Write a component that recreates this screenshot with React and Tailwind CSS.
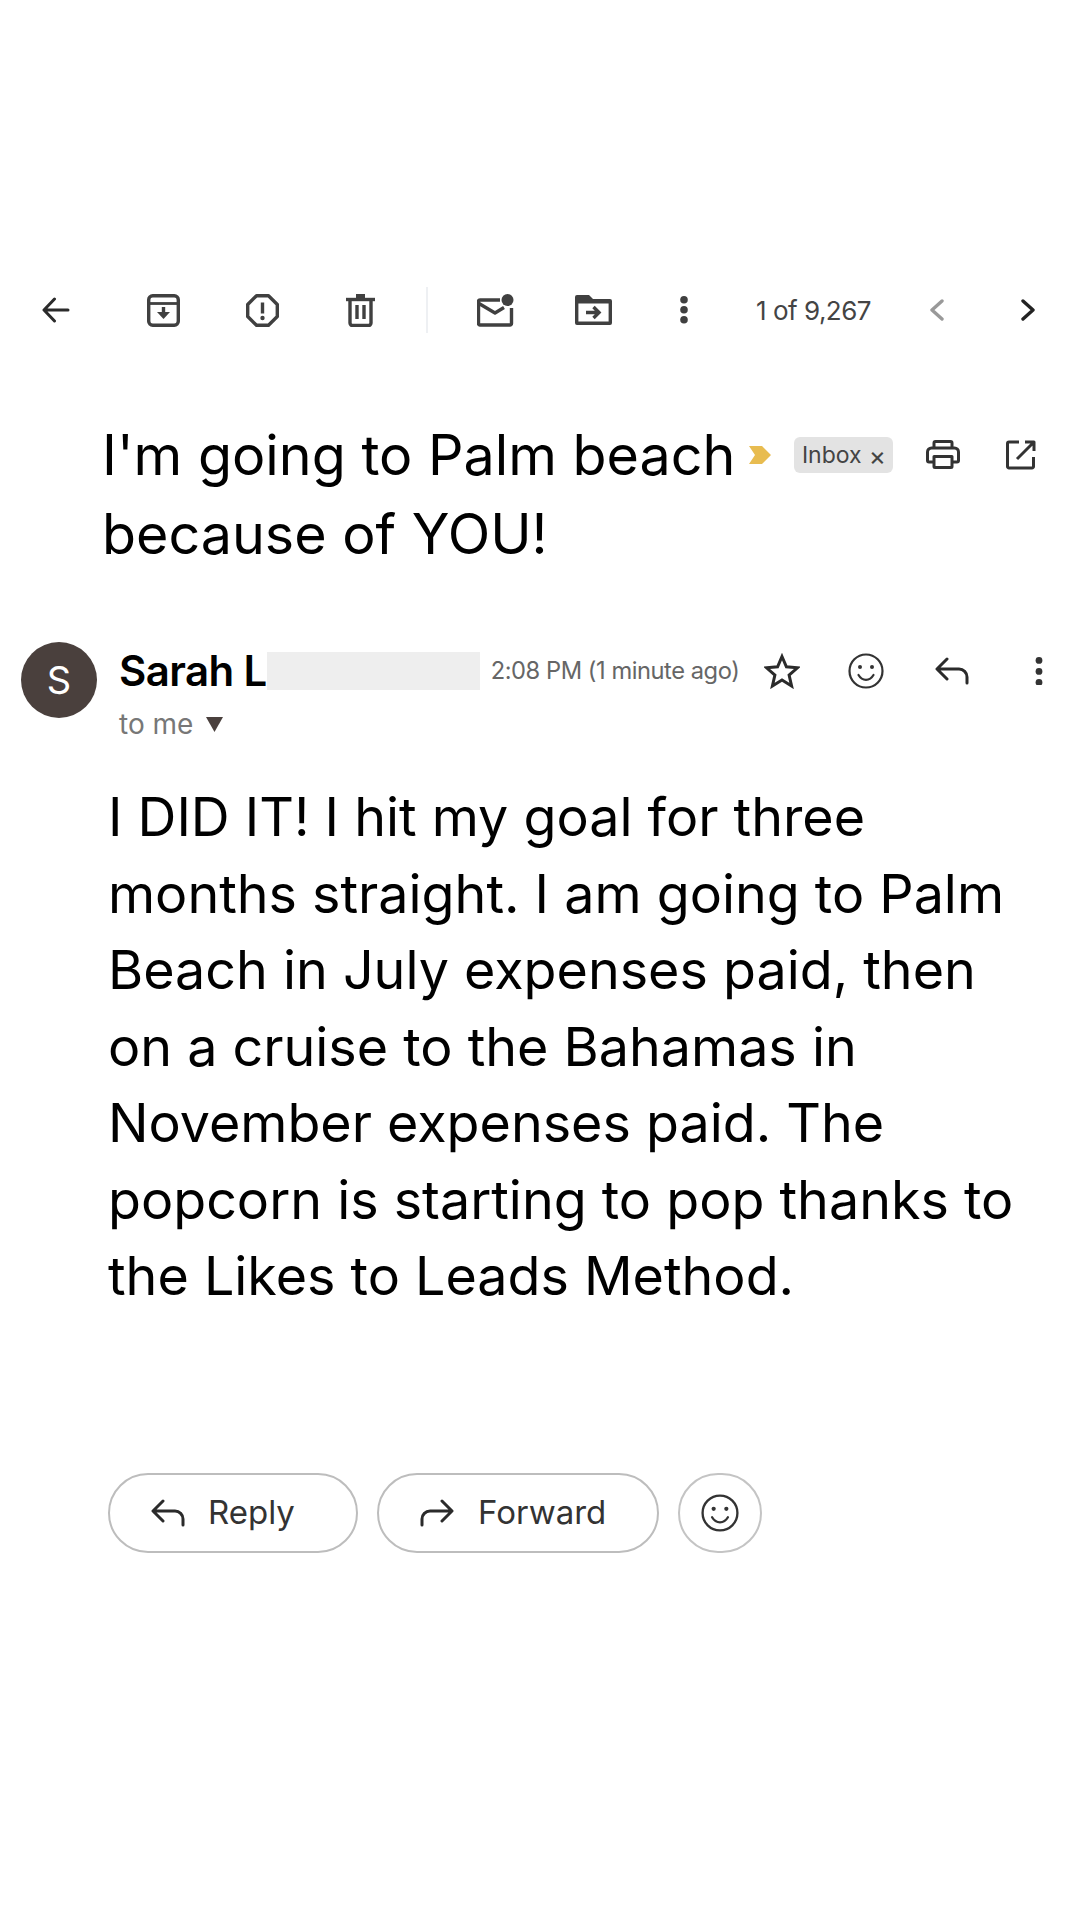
import React from 'react';

const Ink = '#404040';

const BackIcon = () => (
    <svg width="28" height="28" viewBox="0 0 28 28" fill="none" stroke="#2b2b2b" strokeWidth="3" strokeLinecap="round" strokeLinejoin="round">
        <path d="M26 14H2.500M12.500 3 2 14l10.500 11" />
    </svg>
);

const ArchiveIcon = () => (
    <svg width="33" height="33" viewBox="0 0 33 33" fill="none" stroke={Ink} strokeWidth="3.400" strokeLinejoin="round">
        <rect x="1.700" y="1.700" width="29.600" height="29.600" rx="4" />
        <path d="M2 9.500h29" strokeWidth="2.800" />
        <path d="M16.500 13v8" strokeWidth="3.400" />
        <path d="M10 18h13l-6.500 7z" fill={Ink} stroke="none" />
    </svg>
);

const ReportIcon = () => (
    <svg width="33" height="33" viewBox="0 0 33 33" fill="none" stroke={Ink} strokeWidth="3.400" strokeLinejoin="round">
        <path d="M10.500 1.700h12l8.800 8.800v12l-8.800 8.800h-12l-8.800-8.800v-12z" />
        <path d="M16.500 8.500v11" />
        <circle cx="16.500" cy="24" r="2.200" fill={Ink} stroke="none" />
    </svg>
);

const TrashIcon = () => (
    <svg width="29" height="33" viewBox="0 0 29 33" fill="none" stroke={Ink} strokeWidth="3.400" strokeLinejoin="round">
        <path d="M0 5.500h29" />
        <path d="M10 2h9" strokeWidth="4" />
        <path d="M4 6v23a2.500 2.500 0 0 0 2.500 2.500h16a2.500 2.500 0 0 0 2.500-2.500V6" />
        <path d="M11 11v14M18 11v14" />
    </svg>
);

const UnreadIcon = () => (
    <svg width="37" height="33" viewBox="0 0 37 33" fill="none" stroke={Ink} strokeWidth="3.400" strokeLinejoin="round">
        <path d="M23 6H3a1.500 1.500 0 0 0-1.500 1.500v22A1.500 1.500 0 0 0 3 31h30a1.500 1.500 0 0 0 1.500-1.500V14" />
        <path d="M2 9.500 18 19l9-5.500" />
        <circle cx="30.500" cy="6" r="6" fill={Ink} stroke="none" />
    </svg>
);

const MoveIcon = () => (
    <svg width="37" height="30" viewBox="0 0 37 30" fill="none">
        <path d="M2 0h12l4 4h17a2 2 0 0 1 2 2v22a2 2 0 0 1-2 2H2a2 2 0 0 1-2-2V2a2 2 0 0 1 2-2z" fill={Ink} />
        <rect x="3.400" y="8.500" width="30.200" height="18" fill="#fff" />
        <path d="M11 17.500h13M18.500 12l5.500 5.500-5.500 5.500" stroke={Ink} strokeWidth="3.400" />
    </svg>
);

const Dots = ({ size = 3.800, gap = 10, color = Ink }) => (
    <svg width="10" height={gap * 2 + size * 2} viewBox={`0 0 10 ${gap * 2 + size * 2}`} fill={color}>
        <circle cx="5" cy={size} r={size} />
        <circle cx="5" cy={size + gap} r={size} />
        <circle cx="5" cy={size + gap * 2} r={size} />
    </svg>
);

const Chevron = ({ dir, color }) => (
    <svg width="15" height="22" viewBox="0 0 15 22" fill="none" stroke={color} strokeWidth="3.400" strokeLinecap="round" strokeLinejoin="round">
        <path d={dir === 'left' ? 'M13 2 3 11l10 9' : 'M2 2l10 9-10 9'} />
    </svg>
);

const PrintIcon = () => (
    <svg width="34" height="29" viewBox="0 0 34 29" fill="none" stroke="#333" strokeWidth="3" strokeLinejoin="round">
        <path d="M8 8V3a1.500 1.500 0 0 1 1.500-1.500h15A1.500 1.500 0 0 1 26 3v5" />
        <path d="M8 22H3a1.500 1.500 0 0 1-1.500-1.500V12A4 4 0 0 1 5.500 8h23a4 4 0 0 1 4 4v8.500A1.500 1.500 0 0 1 31 22h-5" />
        <path d="M8 16.500h18v10a1 1 0 0 1-1 1H9a1 1 0 0 1-1-1z" />
    </svg>
);

const OpenIcon = () => (
    <svg width="30" height="30" viewBox="0 0 30 30" fill="none" stroke="#333" strokeWidth="3" strokeLinejoin="round">
        <path d="M13 2H3a1.500 1.500 0 0 0-1.500 1.500v23A1.500 1.500 0 0 0 3 28h23a1.500 1.500 0 0 0 1.500-1.500V17" />
        <path d="M19 2h9v9M28 2 11 19" />
    </svg>
);

const StarIcon = () => (
    <svg width="36" height="36" viewBox="0 0 36 36" fill="none" stroke="#2b2b2b" strokeWidth="3" strokeLinejoin="miter">
        <path d="M18 3.500l4.400 10.300 11.100 1-8.400 7.300 2.500 10.900L18 27l-9.600 6 2.500-10.900L2.500 14.800l11.100-1z" />
    </svg>
);

const SmileIcon = ({ size = 36 }) => (
    <svg width={size} height={size} viewBox="0 0 36 36" fill="none" stroke="#333" strokeWidth="2.200">
        <circle cx="18" cy="18" r="16.500" />
        <circle cx="12" cy="14" r="2" fill="#333" stroke="none" />
        <circle cx="24" cy="14" r="2" fill="#333" stroke="none" />
        <path d="M10.500 22c2 3.400 4.500 4.800 7.500 4.800s5.500-1.400 7.500-4.800" strokeLinecap="round" />
    </svg>
);

const ReplyIcon = () => (
    <svg width="34" height="28" viewBox="0 0 34 28" fill="none" stroke="#2b2b2b" strokeWidth="3" strokeLinecap="round" strokeLinejoin="round">
        <path d="M12 2 2 12l10 10M3 12h21a8 8 0 0 1 8 8v6" />
    </svg>
);

const ForwardIcon = () => (
    <svg width="34" height="28" viewBox="0 0 34 28" fill="none" stroke="#2b2b2b" strokeWidth="3" strokeLinecap="round" strokeLinejoin="round">
        <path d="M22 2l10 10-10 10M31 12H10a8 8 0 0 0-8 8v6" />
    </svg>
);

const bodyText = [
    'I DID IT! I hit my goal for three',
    'months straight. I am going to Palm',
    'Beach in July expenses paid, then',
    'on a cruise to the Bahamas in',
    'November expenses paid. The',
    'popcorn is starting to pop thanks to',
    'the Likes to Leads Method.',
];

const App = () => {
    return (
        <div className="w-[1080px] h-[1920px] bg-white overflow-hidden font-['Inter',sans-serif] text-black">
            {/* Toolbar */}
            <div className="flex items-center h-[80px] mt-[270px] pl-[42px]">
                <BackIcon />
                <div className="ml-[77px]"><ArchiveIcon /></div>
                <div className="ml-[66px]"><ReportIcon /></div>
                <div className="ml-[67px]"><TrashIcon /></div>
                <div className="ml-[51px] w-[2px] h-[46px] bg-[#eef0f3]" />
                <div className="ml-[49px]"><UnreadIcon /></div>
                <div className="ml-[61px]"><MoveIcon /></div>
                <div className="ml-[67px]"><Dots /></div>
                <span className="ml-[67px] w-[173px] text-[26px] tracking-[-0.5px] text-[#444]">1 of 9,267</span>
                <Chevron dir="left" color="#999" />
                <div className="ml-[77px]"><Chevron dir="right" color="#222" /></div>
            </div>

            {/* Subject */}
            <div className="pl-[102px] mt-[65px] text-[55.600px] leading-[79px]">
                <div className="flex items-center">
                    <span>I'm going to Palm beach</span>
                    <svg className="ml-[14px]" width="22" height="18" viewBox="0 0 22 18" fill="#e8bc50">
                        <path d="M0 0h13l9 9-9 9H0l6-9z" />
                    </svg>
                    <span className="flex items-center justify-center ml-[23px] w-[99px] h-[36px] pt-[2px] rounded-[6px] bg-[#e3e3e3] text-[23px] leading-none text-[#444]">
                        Inbox <span className="ml-[7px] text-[26px]">×</span>
                    </span>
                    <div className="ml-[33px]"><PrintIcon /></div>
                    <div className="ml-[46px]"><OpenIcon /></div>
                </div>
                <div>because of YOU!</div>
            </div>

            {/* Sender */}
            <div className="flex mt-[69px] pl-[21px]">
                <div className="flex items-center justify-center w-[76px] h-[76px] rounded-full bg-[#4a403d] text-white text-[38px]">S</div>
                <div className="ml-[22px] pt-[6px]">
                    <div className="flex items-center h-[46px]">
                        <span className="text-[42px] font-semibold tracking-[-0.6px] leading-none">Sarah L</span>
                        <div className="w-[213px] h-[38px] bg-[#eeeeee]" />
                        <span className="ml-[11px] text-[23.700px] tracking-[-0.45px] text-[#666]">2:08 PM (1 minute ago)</span>
                        <div className="ml-[25px]"><StarIcon /></div>
                        <div className="ml-[48px]"><SmileIcon /></div>
                        <div className="ml-[51px]"><ReplyIcon /></div>
                        <div className="ml-[65px]"><Dots size={3.400} gap={11} color="#333" /></div>
                    </div>
                    <div className="flex items-center mt-[12px] text-[28px] leading-[36px] text-[#777]">
                        to me
                        <svg className="ml-[13px]" width="17" height="15" viewBox="0 0 17 15" fill="#4a403d">
                            <path d="M0 0h17l-8.500 15z" />
                        </svg>
                    </div>
                </div>
            </div>

            {/* Message body */}
            <div className="pl-[108px] mt-[37px] text-[53.800px] leading-[76.500px]">
                {bodyText.map((line) => (
                    <div key={line}>{line}</div>
                ))}
            </div>

            {/* Actions */}
            <div className="flex gap-[19px] pl-[108px] mt-[158px] text-[33px] text-[#333]">
                <button className="flex items-center w-[250px] h-[80px] pl-[41px] gap-[23px] rounded-full border-2 border-[#bdbdbd]">
                    <ReplyIcon />
                    Reply
                </button>
                <button className="flex items-center w-[282px] h-[80px] pl-[41px] gap-[24px] rounded-full border-2 border-[#bdbdbd]">
                    <ForwardIcon />
                    Forward
                </button>
                <button className="flex items-center justify-center w-[84px] h-[80px] rounded-full border-2 border-[#c4c4c4]">
                    <SmileIcon size={38} />
                </button>
            </div>
        </div>
    );
};

export default App;
